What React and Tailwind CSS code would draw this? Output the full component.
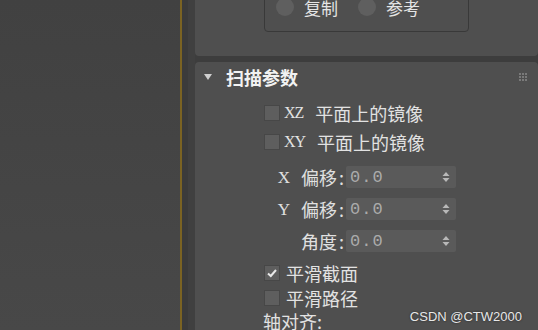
import React from 'react';

const cjk = { fontFamily: '"Noto Sans CJK SC", "Noto Sans", sans-serif' };
const mono = { fontFamily: '"Liberation Mono", "DejaVu Sans Mono", monospace' };
const serif = { fontFamily: '"Liberation Serif", "DejaVu Serif", serif' };

const Check = ({ checked }) => (
  <div className="w-[16px] h-[16px] bg-[#5e5e5e] border border-[#474747] flex items-center justify-center">
    {checked && (
      <svg width="12" height="12" viewBox="0 0 12 12">
        <path d="M2 6.5 L4.8 9 L10 3" stroke="#e8e8e8" strokeWidth="2" fill="none" />
      </svg>
    )}
  </div>
);

const Spinner = () => (
  <div className="w-[110px] h-[22px] bg-[#5a5a5a] rounded-[2px] flex items-center justify-between pl-[4px] pr-[6px]">
    <span className="text-[17px] text-[#ababab] leading-none tracking-[1px]" style={mono}>0.0</span>
    <svg width="8" height="12" viewBox="0 0 8 12">
      <path d="M4 1 L7.5 5 L0.5 5 Z" fill="#b8b8b8" />
      <path d="M4 11 L7.5 7 L0.5 7 Z" fill="#b8b8b8" />
    </svg>
  </div>
);

const SpinRow = ({ latin, label }) => (
  <div className="flex items-center h-[22px]">
    <div className="w-[82px] flex items-center justify-end text-[18px] text-[#e0e0e0] leading-none">
      {latin && <span className="text-[17px] mr-[11px]" style={serif}>{latin}</span>}
      <span style={cjk}>{label}</span>
      <span className="ml-[2px] mr-[2px]" style={cjk}>:</span>
    </div>
    <Spinner />
  </div>
);

export default function App() {
  return (
    <div className="w-[538px] h-[330px] flex overflow-hidden bg-[#3d3d3d]" style={cjk}>
      <div className="w-[180px] h-full bg-gradient-to-b from-[#414141] to-[#484848]" />
      <div className="w-[2px] h-full bg-[#7b6322]" />
      <div className="w-[6px] h-full bg-[#3b3b3b]" />
      <div className="w-[7px] h-full bg-[#404040]" />
      <div className="flex-1 flex flex-col gap-[6px]">
        <div className="h-[56px] bg-[#4f4f4f] rounded-b-[4px] overflow-hidden pl-[69px] shrink-0">
          <div className="w-[205px] h-[40px] -mt-[8px] border border-[#393939] rounded-[4px] flex items-center pl-[11px] text-[#e4e4e4] text-[17px]">
            <div className="flex items-center -mt-[10px]">
              <div className="w-[18px] h-[18px] rounded-full bg-[#5f5f5f]" />
              <span className="ml-[10px] leading-none">复制</span>
              <div className="ml-[20px] w-[18px] h-[18px] rounded-full bg-[#5f5f5f]" />
              <span className="ml-[10px] leading-none">参考</span>
            </div>
          </div>
        </div>
        <div className="flex-1 bg-[#4f4f4f] rounded-t-[4px] relative">
          <div className="flex items-center h-[30px] pl-[9px] pr-[11px]">
            <svg width="8" height="6" viewBox="0 0 8 6">
              <path d="M0 0 L8 0 L4 6 Z" fill="#cfcfcf" />
            </svg>
            <span className="ml-[14px] text-[18px] font-bold text-[#f2f2f2] leading-none">扫描参数</span>
            <div className="ml-auto grid grid-cols-3 gap-[1px]">
              {Array.from({ length: 9 }).map((_, i) => (
                <div key={i} className="w-[2px] h-[2px] bg-[#7a7a7a]" />
              ))}
            </div>
          </div>
          <div className="pl-[69px] flex flex-col text-[#e2e2e2]">
            <div className="flex items-center h-[22px] mt-[10px]">
              <Check />
              <span className="ml-[4px] text-[16px] leading-none tracking-[-1px]" style={serif}>XZ</span>
              <span className="ml-[12px] text-[18px] leading-none">平面上的镜像</span>
            </div>
            <div className="flex items-center h-[22px] mt-[7px]">
              <Check />
              <span className="ml-[4px] text-[16px] leading-none tracking-[-1px]" style={serif}>XY</span>
              <span className="ml-[12px] text-[18px] leading-none">平面上的镜像</span>
            </div>
            <div className="flex flex-col gap-[10px] mt-[13px]">
              <SpinRow latin="X" label="偏移" />
              <SpinRow latin="Y" label="偏移" />
              <SpinRow label="角度" />
            </div>
            <div className="flex items-center h-[22px] mt-[10px]">
              <Check checked />
              <span className="ml-[6px] text-[18px] leading-none">平滑截面</span>
            </div>
            <div className="flex items-center h-[22px] mt-[3px]">
              <Check />
              <span className="ml-[6px] text-[18px] leading-none">平滑路径</span>
            </div>
            <div className="flex items-center h-[22px] -ml-[1px] mt-[1px]">
              <span className="text-[18px] leading-none">轴对齐:</span>
            </div>
          </div>
          <div
            className="absolute right-[16px] bottom-[9px] text-[13px] text-[#e8e8e8] leading-none"
            style={{ fontFamily: '"Liberation Sans", Arial, sans-serif', textShadow: '0 0 2px #222' }}
          >
            CSDN @CTW2000
          </div>
        </div>
      </div>
    </div>
  );
}
